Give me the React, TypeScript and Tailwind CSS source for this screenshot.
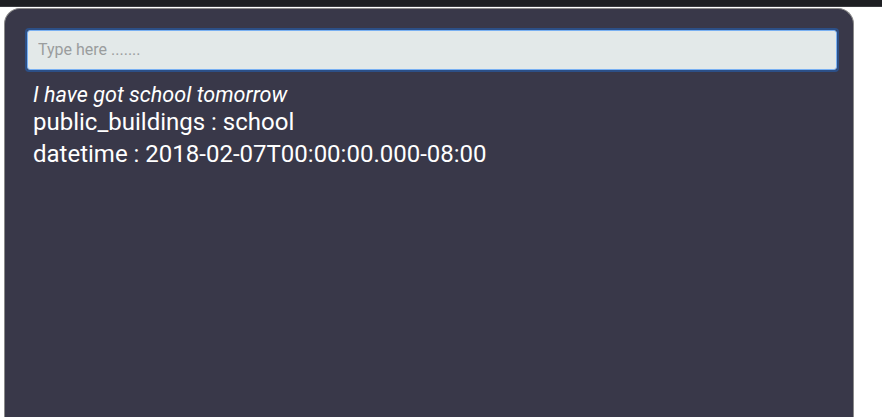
export default function App() {
  return (
    <div className="min-h-[417px] w-[882px] bg-white overflow-hidden" style={{ fontFamily: "Roboto, 'Noto Sans', sans-serif" }}>
      <div className="h-[7px] w-full bg-[#1e1f23] border-b border-[#3a3b3f]" />
      <div className="ml-[4px] mt-[1px] w-[850px] h-[420px] rounded-t-[16px] bg-[#393849] border border-[#8a8a8a] border-b-0 pt-[19px] pl-[20px] pr-[14px]">
        <div className="rounded-[4px] border-[2px] border-[#2c4f86] ">
          <input
            autoFocus
            placeholder="Type here ......."
            className="block w-full h-[40px] rounded-[3px] border border-[#79b0f2] bg-[#e3e9e9] pl-[10px] pb-[2px] text-[16px] text-[#333] placeholder:text-[#9a9d9e] outline-none caret-black"
          />
        </div>
        <div className="pl-[8px] pt-[10px] text-white">
          <div className="italic text-[21.6px] leading-[25px]">I have got school tomorrow</div>
          <div className="text-[24px] leading-[30px]">public_buildings : school</div>
          <div className="text-[24px] leading-[34px]">datetime : 2018-02-07T00:00:00.000-08:00</div>
        </div>
      </div>
    </div>
  );
}
